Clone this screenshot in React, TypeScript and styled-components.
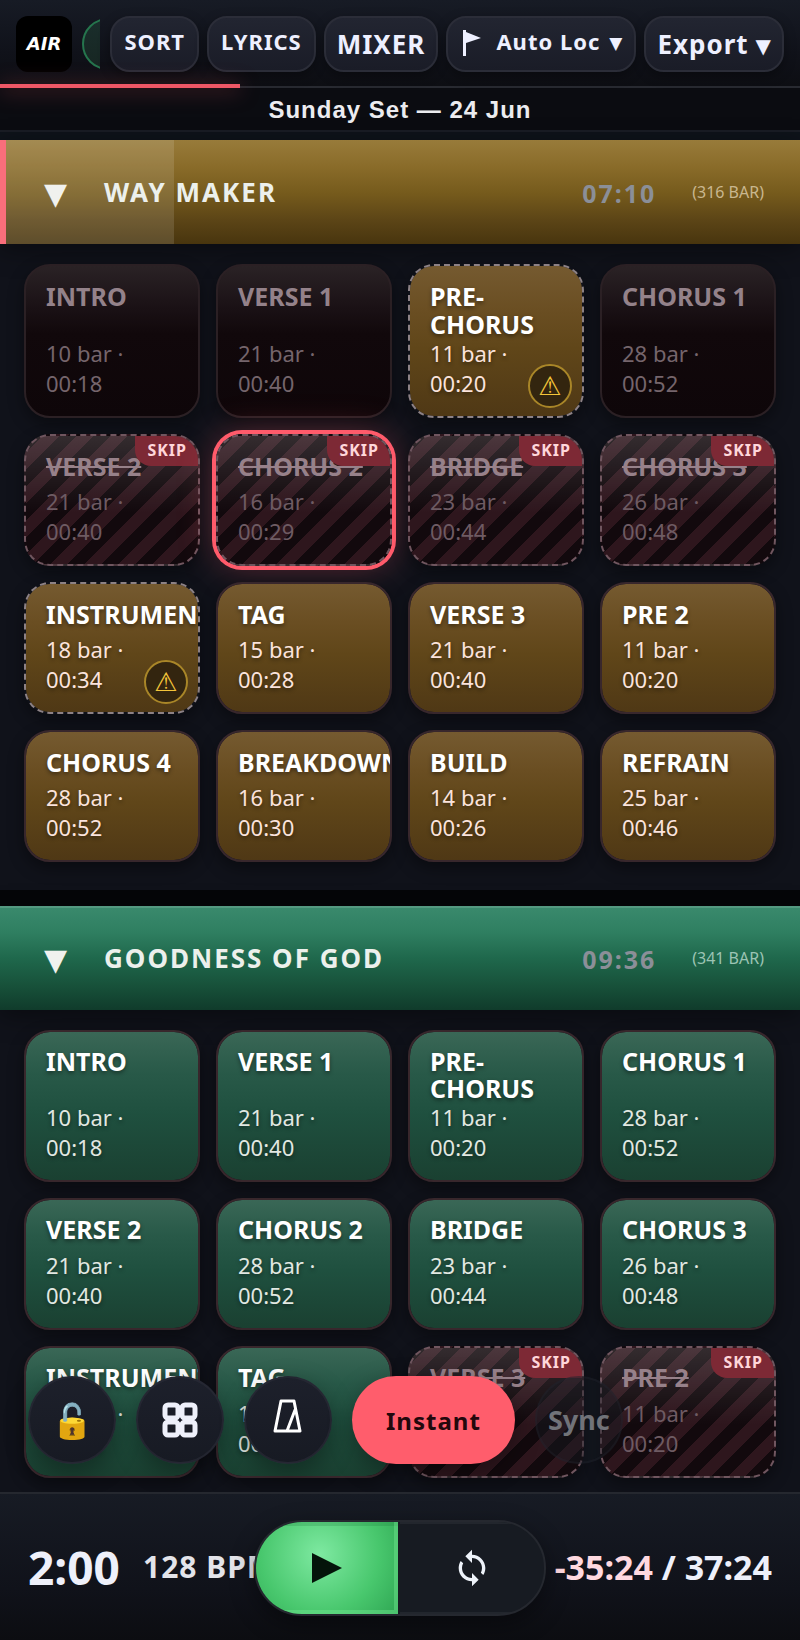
import React from "react";
import styled, { createGlobalStyle, css } from "styled-components";

const Global = createGlobalStyle`
  *, *::before, *::after { box-sizing: border-box; }
  html, body { margin: 0; background: #0b0c11; }
  body, button { font-family: "Noto Sans", "DejaVu Sans", sans-serif; }
  button { border: 0; margin: 0; padding: 0; background: none; color: inherit; cursor: pointer; text-align: left; }
  h1, h2, h3, p { margin: 0; }
`;

const Shell = styled.div`
  display: flex;
  flex-direction: column;
  min-height: 100vh;
  color: #eef0fa;
  background: #0d0e14;
`;

const TopBar = styled.header`
  position: relative;
  z-index: 2;
  display: flex;
  align-items: center;
  gap: 8px;
  padding: 16px 16px 14px;
  border-bottom: 2px solid #282a31;
  background: linear-gradient(180deg, #171b25 0%, #10121a 60%, #0d0e13 100%);
`;

const Logo = styled.a`
  flex: none;
  display: flex;
  align-items: center;
  justify-content: center;
  width: 56px;
  height: 56px;
  border-radius: 12px;
  background: #000;
  color: #fff;
  font: italic 700 18px/20px "DejaVu Sans", sans-serif;
  text-decoration: none;
`;

const StatusClip = styled.div`
  flex: 1;
  min-width: 0;
  height: 52px;
  margin: 0 2px;
  overflow: hidden;
`;

const StatusPill = styled.div`
  width: 120px;
  height: 52px;
  border: 2px solid #25754d;
  border-radius: 26px;
  background: linear-gradient(180deg, #1a2e2c, #172622);
`;

const ToolButton = styled.button<{ $large?: boolean }>`
  flex: none;
  display: flex;
  align-items: center;
  height: 56px;
  padding: ${(p) => (p.$large ? "0 11px" : "0 12px 6px")};
  border: 2px solid #2b2d38;
  border-radius: 20px;
  background: linear-gradient(180deg, #222531 0%, #1a1c27 100%);
  box-shadow: 0 4px 12px rgba(0, 0, 0, 0.35);
  color: #eef0ff;
  font-size: ${(p) => (p.$large ? 26 : 22)}px;
  line-height: 30px;
  font-weight: 700;
  letter-spacing: 1px;
  white-space: nowrap;
  svg { margin: 4px 14px 0 2px; }
`;

const Caret = styled.span<{ $large?: boolean }>`
  margin-left: ${(p) => (p.$large ? 7 : 9)}px;
  padding-top: 4px;
  font-size: ${(p) => (p.$large ? 20 : 17)}px;
  letter-spacing: 0;
`;

const SetProgress = styled.div`
  position: absolute;
  left: 0;
  bottom: -2px;
  width: 30%;
  height: 4px;
  background: #ee5766;
  box-shadow: 0 2px 20px rgba(255, 91, 107, 0.5);
`;

const SetTitle = styled.h1`
  padding: 7px 16px 5px;
  border-bottom: 2px solid #1a1d25;
  background: #0b0c11;
  text-align: center;
  font: 700 24px/30px "Liberation Sans", sans-serif;
  letter-spacing: 1px;
  color: #ececf0;
`;

const SongList = styled.main`
  flex: 1;
  display: flex;
  flex-direction: column;
  gap: 16px;
  padding-top: 8px;
  background: linear-gradient(180deg, #0e131a 0, #0e131a 8px, #050608 8px);
`;

type Tone = "gold" | "green";

const headerFill = {
  gold: "linear-gradient(180deg, #987b3a 0%, #8a6c2a 25%, #755a1c 52%, #5b4416 78%, #48350e 100%)",
  green: "linear-gradient(180deg, #3a8a6d 0%, #2f7f61 25%, #1f684c 50%, #175039 78%, #103b2b 100%)",
};
const cardFill = {
  gold: "linear-gradient(180deg, #755a30 0%, #6a4e22 30%, #604619 55%, #4f3815 100%)",
  green: "linear-gradient(180deg, #3a6756 0%, #285948 28%, #1f503f 55%, #1a4031 100%)",
};

const Grid = styled.div`
  display: grid;
  grid-template-columns: repeat(4, minmax(0, 1fr));
  gap: 16px;
  padding: 20px 24px 28px;
`;

const Song = styled.section`
  background: #10121a;
  &:last-child { flex: 1; }
  &:last-child ${Grid} { padding-bottom: 14px; }
`;

const SongHeader = styled.header<{ $tone: Tone; $active?: boolean }>`
  position: relative;
  display: flex;
  align-items: center;
  height: 104px;
  padding: 0 36px 0 40px;
  background: ${(p) => headerFill[p.$tone]};
  box-shadow: 0 6px 24px rgba(0, 0, 0, 0.4)${(p) => (p.$active ? "" : ", inset 0 2px 0 rgba(255, 255, 255, 0.14)")};
  ${(p) =>
    p.$active &&
    css`
      border-left: 6px solid #f96e7b;
      padding-left: 34px;
    `}
`;

const Elapsed = styled.div`
  position: absolute;
  inset: 0 auto 0 0;
  width: 168px;
  background: rgba(255, 255, 255, 0.12);
`;

const Collapse = styled.button`
  position: relative;
  flex: none;
  width: 64px;
  padding: 2px 0 0 4px;
  color: #f0f1ee;
  font-size: 30px;
  line-height: 36px;
`;

const SongName = styled.h2`
  position: relative;
  flex: 1;
  font-size: 26px;
  line-height: 36px;
  font-weight: 700;
  letter-spacing: 2px;
  text-transform: uppercase;
  color: #ecf0ec;
`;

const SongTime = styled.span`
  width: 110px;
  padding-top: 1px;
  font-size: 25px;
  line-height: 36px;
  font-weight: 700;
  letter-spacing: 2px;
  color: #8b8f98;
`;

const SongBars = styled.span<{ $tone: Tone }>`
  font-size: 16px;
  line-height: 36px;
  color: ${(p) => (p.$tone === "gold" ? "#c9b78f" : "#9cc4b4")};
`;

type State = "ready" | "played" | "skipped" | "warned";

const Card = styled.button<{ $tone: Tone; $state: State; $queued?: boolean }>`
  position: relative;
  display: flex;
  flex-direction: column;
  align-items: flex-start;
  justify-content: space-between;
  padding: 16px 20px 18px;
  overflow: hidden;
  border: 2px solid #38272c;
  border-radius: 26px;
  background: ${(p) => cardFill[p.$tone]} padding-box;
  box-shadow: 0 6px 16px rgba(0, 0, 0, 0.4);
  color: #fff;
  text-shadow: 0 2px 4px rgba(0, 0, 0, 0.45);
  h3 { line-height: ${(p) => (p.$tone === "gold" ? 28 : 27)}px; }
  p { color: ${(p) => (p.$tone === "gold" ? "#fbe3dc" : "#e2e8e2")}; }

  ${(p) =>
    p.$state === "warned" &&
    css`
      border: 2px dashed #8d8286;
    `}
  ${(p) =>
    p.$state === "played" &&
    css`
      border-color: #2b2024;
      background: linear-gradient(180deg, #2a2225 0%, #1a1115 28%, #11080b 45%, #0e0609 100%);
      text-shadow: none;
      h3 { color: #94828a; }
      p { color: #75656c; }
    `}
  ${(p) =>
    p.$state === "skipped" &&
    css`
      border: 2px dashed #70565f;
      background:
        linear-gradient(180deg, rgba(255, 255, 255, 0.14) 0%, rgba(255, 255, 255, 0.03) 45%, rgba(255, 255, 255, 0) 60%),
        repeating-linear-gradient(135deg, #12090d 0, #12090d 12px, #2e161d 12px, #2e161d 24px);
      text-shadow: none;
      h3 { color: #97818a; text-decoration: line-through; }
      p { color: #6e5b63; }
    `}
  ${(p) =>
    p.$queued &&
    css`
      box-shadow: 0 0 0 4px #ff5b6b, 0 0 36px rgba(255, 91, 107, 0.35);
    `}
`;

const PartName = styled.h3`
  min-height: 34px;
  font-size: 25px;
  font-weight: 700;
`;

const PartMeta = styled.p`
  width: 100px;
  font-size: 22px;
  line-height: 30px;
`;

const SkipTag = styled.span`
  position: absolute;
  top: 0;
  right: 0;
  padding: 0 11px 2px 12px;
  border-bottom-left-radius: 16px;
  background: #7d2935;
  color: #ffd6da;
  font-size: 16px;
  line-height: 28px;
  font-weight: 700;
  letter-spacing: 1px;
`;

const Warning = styled.span`
  position: absolute;
  right: 10px;
  bottom: 8px;
  display: flex;
  align-items: center;
  justify-content: center;
  width: 44px;
  height: 44px;
  border: 2px solid #a98628;
  border-radius: 50%;
  background: #33250f;
  color: #f5c53a;
  font: 26px/28px "DejaVu Sans", sans-serif;
  text-shadow: none;
`;

const BottomDock = styled.div`
  position: sticky;
  bottom: 0;
  z-index: 3;
`;

const QuickActions = styled.div`
  position: absolute;
  left: 28px;
  right: 28px;
  bottom: 100%;
  display: flex;
  gap: 20px;
  padding-bottom: 28px;
`;

const RoundButton = styled.button<{ $off?: boolean }>`
  flex: none;
  display: flex;
  align-items: center;
  justify-content: center;
  width: 88px;
  height: 88px;
  border: 2px solid rgba(43, 45, 56, 0.6);
  border-radius: 44px;
  background: linear-gradient(180deg, #1d202b, #171a23);
  box-shadow: 0 8px 24px rgba(0, 0, 0, 0.35);
  font-size: 34px;
  line-height: 44px;
  ${(p) =>
    p.$off &&
    css`
      border-color: rgba(43, 45, 56, 0.25);
      background: rgba(23, 27, 35, 0.4);
      box-shadow: none;
      color: #717379;
      font-size: 27px;
      font-weight: 700;
    `}
`;

const ModeButton = styled.button`
  flex: none;
  height: 88px;
  padding: 0 34px;
  border-radius: 44px;
  background: #ff5d6c;
  box-shadow: 0 8px 24px rgba(0, 0, 0, 0.35);
  color: #23080c;
  font-size: 24px;
  font-weight: 700;
  letter-spacing: 1px;
`;

const Footer = styled.footer`
  position: relative;
  display: flex;
  align-items: center;
  height: 148px;
  padding: 0 28px;
  border-top: 2px solid #25282f;
  background: linear-gradient(180deg, #171b24 0%, #10121a 65%, #0c0d11 100%);
`;

const Clock = styled.span`
  width: 115px;
  font-size: 46px;
  line-height: 60px;
  font-weight: 700;
`;

const Tempo = styled.span`
  flex: 1;
  font-size: 30px;
  line-height: 60px;
  font-weight: 700;
  letter-spacing: 1px;
  color: #e3e4ea;
`;

const Totals = styled.span`
  font-size: 34px;
  line-height: 60px;
  font-weight: 700;
`;

const Remaining = styled.span`
  color: #ffd9e0;
`;

const Transport = styled.div`
  position: absolute;
  left: 50%;
  top: 26px;
  display: flex;
  width: 292px;
  height: 96px;
  margin-left: -146px;
  overflow: hidden;
  border: 2px solid #25282f;
  border-radius: 48px;
  background: #171b22;
  box-shadow: 0 8px 24px rgba(0, 0, 0, 0.4);
`;

const TransportButton = styled.button<{ $play?: boolean }>`
  flex: 1;
  display: flex;
  align-items: center;
  justify-content: center;
  box-shadow: inset 0 2px 0 rgba(255, 255, 255, 0.05), inset 0 -2px 0 rgba(255, 255, 255, 0.05);
  ${(p) =>
    p.$play &&
    css`
      flex: none;
      width: 142px;
      margin-right: 2px;
      background: radial-gradient(circle at 45% 35%, #7ee9a1 0%, #48c76d 60%, #2fa653 100%);
      box-shadow: inset -4px -4px 0 rgba(120, 235, 150, 0.4), inset 0 4px 0 rgba(20, 110, 50, 0.2);
    `}
`;

type Part = [name: string, bars: number, time: string, state?: State, queued?: boolean];

const wayMaker: Part[] = [
  ["INTRO", 10, "00:18", "played"],
  ["VERSE 1", 21, "00:40", "played"],
  ["PRE-CHORUS", 11, "00:20", "warned"],
  ["CHORUS 1", 28, "00:52", "played"],
  ["VERSE 2", 21, "00:40", "skipped"],
  ["CHORUS 2", 16, "00:29", "skipped", true],
  ["BRIDGE", 23, "00:44", "skipped"],
  ["CHORUS 3", 26, "00:48", "skipped"],
  ["INSTRUMENTAL", 18, "00:34", "warned"],
  ["TAG", 15, "00:28"],
  ["VERSE 3", 21, "00:40"],
  ["PRE 2", 11, "00:20"],
  ["CHORUS 4", 28, "00:52"],
  ["BREAKDOWN", 16, "00:30"],
  ["BUILD", 14, "00:26"],
  ["REFRAIN", 25, "00:46"],
];

const goodnessOfGod: Part[] = [
  ["INTRO", 10, "00:18"],
  ["VERSE 1", 21, "00:40"],
  ["PRE-CHORUS", 11, "00:20"],
  ["CHORUS 1", 28, "00:52"],
  ["VERSE 2", 21, "00:40"],
  ["CHORUS 2", 28, "00:52"],
  ["BRIDGE", 23, "00:44"],
  ["CHORUS 3", 26, "00:48"],
  ["INSTRUMENTAL", 18, "00:34"],
  ["TAG", 15, "00:28"],
  ["VERSE 3", 21, "00:40", "skipped"],
  ["PRE 2", 11, "00:20", "skipped"],
];

function SongBlock(props: { name: string; time: string; bars: number; tone: Tone; active?: boolean; parts: Part[] }) {
  return (
    <Song>
      <SongHeader $tone={props.tone} $active={props.active}>
        {props.active && <Elapsed />}
        <Collapse aria-label={`Collapse ${props.name}`}>▼</Collapse>
        <SongName>{props.name}</SongName>
        <SongTime>{props.time}</SongTime>
        <SongBars $tone={props.tone}>({props.bars} BAR)</SongBars>
      </SongHeader>
      <Grid>
        {props.parts.map(([name, bars, time, state = "ready", queued]) => (
          <Card key={name} $tone={props.tone} $state={state} $queued={queued}>
            <PartName>{name}</PartName>
            <PartMeta>
              {bars} bar · {time}
            </PartMeta>
            {state === "skipped" && <SkipTag>SKIP</SkipTag>}
            {state === "warned" && <Warning>⚠</Warning>}
          </Card>
        ))}
      </Grid>
    </Song>
  );
}

const FlagIcon = () => (
  <svg width="20" height="28" viewBox="0 0 20 28" fill="currentColor" aria-hidden="true">
    <path d="M1 1h3v2l15 6-15 5v13H1z" />
  </svg>
);

const GridIcon = () => (
  <svg width="36" height="36" viewBox="0 0 36 36" fill="none" stroke="#eef0fa" strokeWidth="5" aria-hidden="true">
    <rect x="3" y="3" width="13" height="13" rx="3" />
    <rect x="20" y="3" width="13" height="13" rx="3" />
    <rect x="3" y="20" width="13" height="13" rx="3" />
    <rect x="20" y="20" width="13" height="13" rx="3" />
  </svg>
);

const MetronomeIcon = () => (
  <svg width="30" height="44" viewBox="0 0 30 44" fill="none" stroke="#fff" strokeWidth="3" strokeLinejoin="round" strokeLinecap="round" aria-hidden="true">
    <path d="M8 3h13l6 30H2zM14 33l8-21" />
  </svg>
);

const PlayIcon = () => (
  <svg width="30" height="32" viewBox="0 0 30 32" aria-hidden="true">
    <path d="M0 1l30 15L0 31z" fill="#04140a" />
  </svg>
);

const LoopIcon = () => (
  <svg width="40" height="40" viewBox="0 0 24 24" fill="#eef3fa" aria-hidden="true">
    <path d="M12 4V1L8 5l4 4V6c3.31 0 6 2.69 6 6 0 1.01-.25 1.97-.7 2.8l1.46 1.46C19.54 15.03 20 13.57 20 12c0-4.42-3.58-8-8-8zm0 14c-3.31 0-6-2.69-6-6 0-1.01.25-1.97.7-2.8L5.24 7.74C4.46 8.97 4 10.43 4 12c0 4.42 3.58 8 8 8v3l4-4-4-4v3z" />
  </svg>
);

export default function App() {
  return (
    <Shell>
      <Global />
      <TopBar>
        <Logo href="#">AIR</Logo>
        <StatusClip>
          <StatusPill />
        </StatusClip>
        <ToolButton>SORT</ToolButton>
        <ToolButton>LYRICS</ToolButton>
        <ToolButton $large>MIXER</ToolButton>
        <ToolButton>
          <FlagIcon />
          Auto Loc
          <Caret>▼</Caret>
        </ToolButton>
        <ToolButton $large>
          Export
          <Caret $large>▼</Caret>
        </ToolButton>
        <SetProgress />
      </TopBar>
      <SetTitle>Sunday Set — 24 Jun</SetTitle>
      <SongList>
        <SongBlock name="Way Maker" time="07:10" bars={316} tone="gold" active parts={wayMaker} />
        <SongBlock name="Goodness of God" time="09:36" bars={341} tone="green" parts={goodnessOfGod} />
      </SongList>
      <BottomDock>
        <QuickActions>
          <RoundButton aria-label="Unlock">🔓</RoundButton>
          <RoundButton aria-label="Grid">
            <GridIcon />
          </RoundButton>
          <RoundButton aria-label="Metronome">
            <MetronomeIcon />
          </RoundButton>
          <ModeButton>Instant</ModeButton>
          <RoundButton $off>Sync</RoundButton>
        </QuickActions>
        <Footer>
          <Clock>2:00</Clock>
          <Tempo>128 BPM</Tempo>
          <Totals>
            <Remaining>-35:24</Remaining> / 37:24
          </Totals>
          <Transport>
            <TransportButton $play aria-label="Play">
              <PlayIcon />
            </TransportButton>
            <TransportButton aria-label="Loop">
              <LoopIcon />
            </TransportButton>
          </Transport>
        </Footer>
      </BottomDock>
    </Shell>
  );
}
